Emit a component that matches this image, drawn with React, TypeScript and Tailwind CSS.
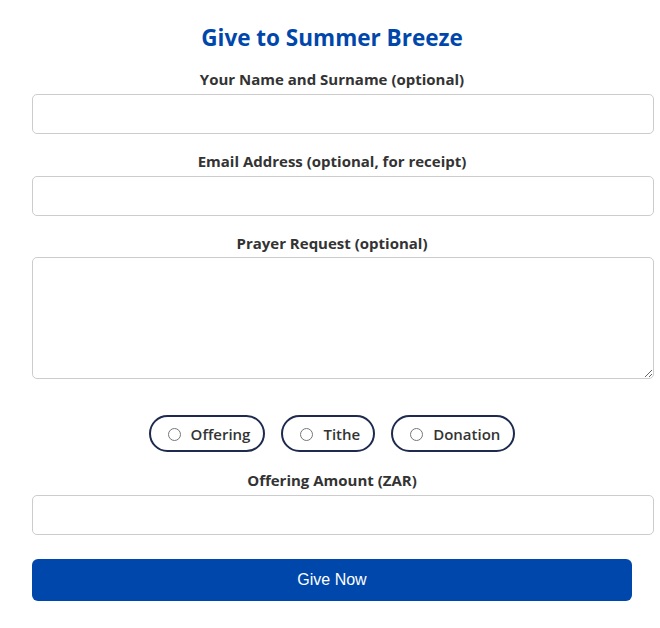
import React from "react";

const font = { fontFamily: '"Open Sans", "Noto Sans", sans-serif' };

function Label({ children, className = "mb-[5px]" }: { children: React.ReactNode; className?: string }) {
  return (
    <label className={`block text-center text-[15px] leading-[20px] font-bold text-[#333333] ${className}`}>
      {children}
    </label>
  );
}

function Pill({ label }: { label: string }) {
  return (
    <label className="flex items-center h-[37px] pl-[17px] pr-[13px] pt-[2px] border-2 border-[#1e2b4f] rounded-full gap-[10px] text-[15px] font-semibold text-[#333333]">
      <span className="w-[13px] h-[13px] rounded-full border border-[#767676] bg-white" />
      {label}
    </label>
  );
}

export default function App() {
  return (
    <div className="bg-white min-h-[628px] w-[660px]" style={font}>
      <div className="w-[600px] ml-[32px] pt-[23px]">
        <h2 className="text-center text-[22.5px] leading-[30px] font-bold text-[#0047ab] mb-[16px]">
          Give to Summer Breeze
        </h2>

        <Label>Your Name and Surname (optional)</Label>
        <input className="block w-[622px] h-[40px] border border-[#cccccc] rounded-[5px] px-[10px] mb-[17px]" />

        <Label>Email Address (optional, for receipt)</Label>
        <input className="block w-[622px] h-[40px] border border-[#cccccc] rounded-[5px] px-[10px] mb-[17px]" />

        <Label className="mb-[4px]">Prayer Request (optional)</Label>
        <textarea className="block w-[622px] h-[122px] border border-[#cccccc] rounded-[5px] px-[10px] mb-[36px]" />

        <div className="flex justify-center gap-[16px] mb-[18px]">
          <Pill label="Offering" />
          <Pill label="Tithe" />
          <Pill label="Donation" />
        </div>

        <Label>Offering Amount (ZAR)</Label>
        <input className="block w-[622px] h-[40px] border border-[#cccccc] rounded-[5px] px-[10px] mb-[24px]" />

        <button
          className="block w-[600px] h-[42px] bg-[#0047ab] text-white text-[16px] rounded-[6px]"
          style={{ fontFamily: '"Liberation Sans", Arial, sans-serif' }}
        >
          Give Now
        </button>
      </div>
    </div>
  );
}
